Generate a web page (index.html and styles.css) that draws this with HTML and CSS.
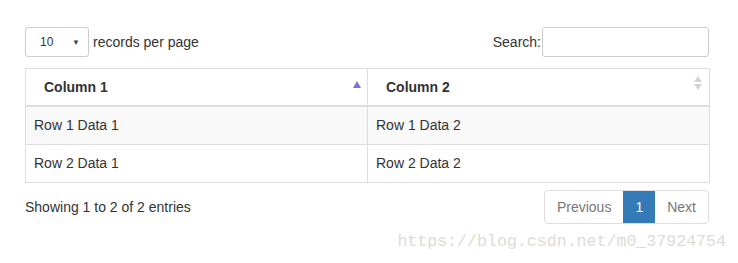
FILE: index.html
```html
<!DOCTYPE html>
<html lang="en">
<head>
    <meta charset="UTF-8">
    <title>Records</title>
    <link rel="stylesheet" href="styles.css">
</head>
<body>
    <div class="wrapper">
        <div class="top-bar">
            <label class="length">
                <span class="select-box">10<span class="caret">&#9660;</span></span>
                records per page
            </label>
            <label class="search">Search:<input type="text" class="search-input"></label>
        </div>

        <table class="data-table">
            <thead>
                <tr>
                    <th class="sort-asc">Column 1<span class="arrow-up"></span></th>
                    <th class="sortable">Column 2<span class="arrow-up"></span><span class="arrow-down"></span></th>
                </tr>
            </thead>
            <tbody>
                <tr class="odd">
                    <td>Row 1 Data 1</td>
                    <td>Row 1 Data 2</td>
                </tr>
                <tr>
                    <td>Row 2 Data 1</td>
                    <td>Row 2 Data 2</td>
                </tr>
            </tbody>
        </table>

        <div class="bottom-bar">
            <div class="info">Showing 1 to 2 of 2 entries</div>
            <ul class="pagination">
                <li class="disabled">Previous</li>
                <li class="active">1</li>
                <li class="disabled">Next</li>
            </ul>
        </div>
    </div>
    <div class="watermark">https://blog.csdn.net/m0_37924754</div>
</body>
</html>
```

FILE: styles.css
```css
body {
    margin: 0;
    font-family: 'Liberation Sans', Arial, sans-serif;
    font-size: 14px;
    line-height: 20px;
    color: #333;
    background: #fff;
}
.wrapper {
    width: 684px;
    padding: 27px 0 0 25px;
}
.top-bar {
    display: flex;
    justify-content: space-between;
    align-items: center;
    height: 30px;
}
.length {
    display: flex;
    align-items: center;
    gap: 4px;
}
.select-box {
    box-sizing: border-box;
    width: 64px;
    height: 30px;
    border: 1px solid #ccc;
    border-radius: 3px;
    font-size: 12px;
    padding-left: 14px;
    display: flex;
    align-items: center;
    position: relative;
}
.caret {
    position: absolute;
    right: 8px;
    top: 5px;
    font-size: 8px;
    color: #444;
}
.search {
    display: flex;
    align-items: center;
}
.search-input {
    box-sizing: border-box;
    width: 167px;
    height: 30px;
    margin: 0 0 0 1px;
    border: 1px solid #ccc;
    border-radius: 3px;
}
.data-table {
    width: 685px;
    margin-top: 11px;
    border-collapse: collapse;
    border: 1px solid #ddd;
    table-layout: fixed;
}
.data-table th,
.data-table td {
    border: 1px solid #ddd;
    text-align: left;
    padding: 8px;
}
.data-table td {
    padding: 8px 8px 9px;
}
.data-table th {
    position: relative;
    padding: 8px 18px;
    font-weight: bold;
    border-bottom: 2px solid #ddd;
}
.data-table tr.odd td {
    background: #f9f9f9;
}
.arrow-up,
.arrow-down {
    position: absolute;
    width: 0;
    height: 0;
    border-left: 4px solid transparent;
    border-right: 4px solid transparent;
}
.sort-asc .arrow-up {
    right: 6px;
    top: 12px;
    border-bottom: 7px solid #7b72d8;
}
.sortable .arrow-up {
    right: 7px;
    top: 7px;
    border-bottom: 6px solid #d4d4d4;
}
.sortable .arrow-down {
    right: 7px;
    top: 15px;
    border-top: 6px solid #d4d4d4;
}
.bottom-bar {
    display: flex;
    justify-content: space-between;
    align-items: center;
    margin-top: 7px;
}
.pagination {
    display: flex;
    margin: 0;
    padding: 0;
    list-style: none;
    border: 1px solid #ddd;
    border-radius: 4px;
    height: 32px;
}
.pagination li {
    padding: 6px 12px;
    color: #777;
}
.pagination li.active {
    background: #337ab7;
    color: #fff;
}
.watermark {
    position: absolute;
    right: 12px;
    top: 232px;
    font-family: 'Liberation Mono', monospace;
    font-size: 16.6px;
    color: #dcdcd6;
}
```
